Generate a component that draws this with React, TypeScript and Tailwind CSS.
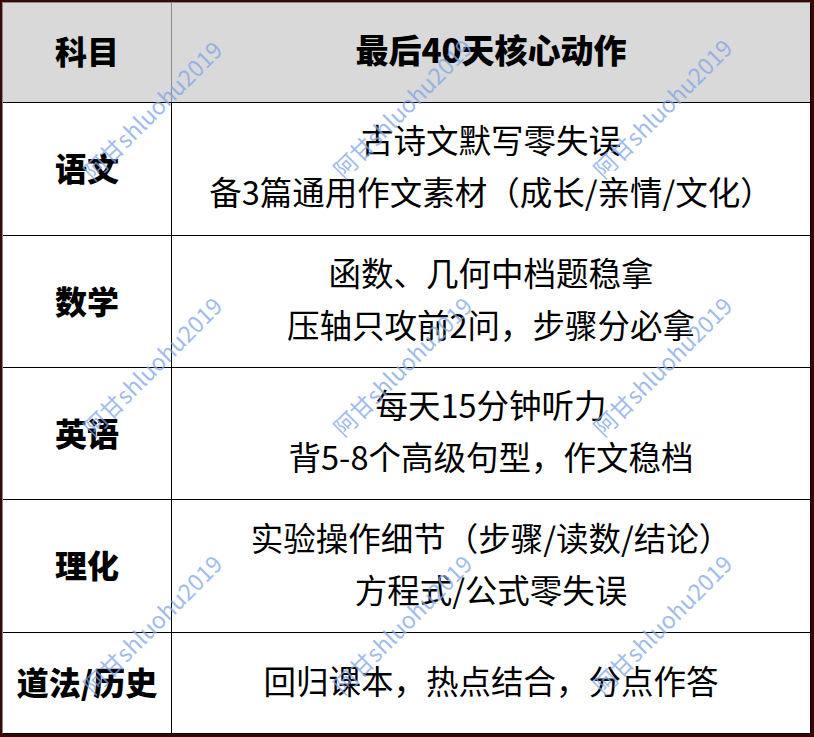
const ROWS: { subject: string; lines: string[]; h: string }[] = [
  { subject: "语文", lines: ["古诗文默写零失误", "备3篇通用作文素材（成长/亲情/文化）"], h: "h-[133px]" },
  { subject: "数学", lines: ["函数、几何中档题稳拿", "压轴只攻前2问，步骤分必拿"], h: "h-[133px]" },
  { subject: "英语", lines: ["每天15分钟听力", "背5-8个高级句型，作文稳档"], h: "h-[132px]" },
  { subject: "理化", lines: ["实验操作细节（步骤/读数/结论）", "方程式/公式零失误"], h: "h-[133px]" },
  { subject: "道法/历史", lines: ["回归课本，热点结合，分点作答"], h: "h-[100px]" },
];

// watermark centres, page coords
const MARKS: [number, number][] = [
  [152, 110], [402, 108], [662, 108],
  [152, 366], [402, 366], [662, 366],
  [152, 624], [402, 624], [662, 624],
];

export default function App() {
  return (
    <div
      className="relative w-[814px] h-[737px] bg-[#3a0707] pt-[2px] pl-[2px] pr-[3px] pb-[3px]"
      style={{ fontFamily: '"Noto Sans CJK SC", "Noto Sans", sans-serif' }}
    >
      <div className="h-full bg-white border border-black border-t-[#8a8a8a] border-l-[#8a8a8a] flex flex-col text-black">
        <div className="h-[100px] flex bg-[#d9d9d9] border-b border-black">
          <div className="w-[169px] shrink-0 border-r border-[#8a8a8a] flex items-center justify-center pb-[5px] text-[32px] font-black">
            科目
          </div>
          <div className="flex-1 flex items-center justify-center pb-[5px] text-[33px] font-black">
            最后40天核心动作
          </div>
        </div>
        {ROWS.map((r, i) => (
          <div
            key={r.subject}
            className={`${r.h} flex ${i < ROWS.length - 1 ? "border-b border-black" : ""}`}
          >
            <div className="w-[169px] shrink-0 border-r border-black flex items-center justify-center pb-[4px] text-[32px] font-black">
              {r.subject}
            </div>
            <div className="flex-1 flex flex-col items-center justify-center pb-[7px] text-[32.5px] leading-[52px]">
              {r.lines.map((l) => (
                <div key={l}>{l}</div>
              ))}
            </div>
          </div>
        ))}
      </div>

      {MARKS.map(([x, y]) => (
        <div
          key={`${x}-${y}`}
          className="absolute pointer-events-none whitespace-nowrap text-[23px] text-[#7fa6e6] opacity-75 -translate-x-1/2 -translate-y-1/2 -rotate-45"
          style={{ left: x, top: y }}
        >
          阿甘shluohu2019
        </div>
      ))}
    </div>
  );
}
